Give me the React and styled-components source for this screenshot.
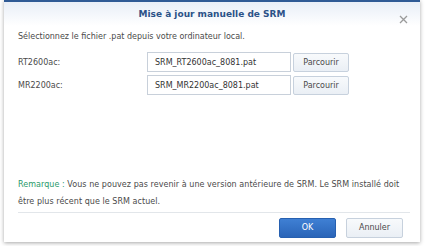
import styled, { createGlobalStyle } from "styled-components"

const Global = createGlobalStyle`
    html, body {
        margin: 0;
        padding: 0;
        background: #ffffff;
    }
    body {
        font-family: "DejaVu Sans", Verdana, sans-serif;
        width: 426px;
        height: 246px;
        overflow: hidden;
    }
`

const Page = styled.div`
    position: relative;
    width: 426px;
    height: 246px;
    padding: 0 6px 4px 4px;
    box-sizing: border-box;
`

const Dialog = styled.div`
    width: 416px;
    height: 242px;
    box-sizing: border-box;
    background: #ffffff;
    border-top: 2px solid #2f5a95;
    box-shadow: 0 1px 4px rgba(0, 0, 0, 0.35);
    display: flex;
    flex-direction: column;
`

const Header = styled.div`
    height: 24px;
    display: flex;
    align-items: center;
    justify-content: center;
    position: relative;
    background: linear-gradient(#e8eef7, #ffffff);
`

const Title = styled.h2`
    margin: 0;
    font-size: 9px;
    font-weight: bold;
    color: #2b5288;
`

const Close = styled.span`
    position: absolute;
    right: 12px;
    top: 7px;
    width: 9px;
    height: 9px;
`

const Body = styled.div`
    flex: 1;
    padding: 6px 14px 0 14px;
    display: flex;
    flex-direction: column;
    color: #4a4a4a;
    font-size: 8px;
`

const Intro = styled.p`
    margin: 0 0 10px 0;
    line-height: 10px;
`

const Row = styled.div`
    display: flex;
    align-items: center;
    height: 20px;
    margin-bottom: 3px;
`

const Label = styled.label`
    width: 129px;
`

const FileInput = styled.div`
    width: 144px;
    height: 20px;
    box-sizing: border-box;
    border: 1px solid #c8d0da;
    padding: 0 7px;
    display: flex;
    align-items: center;
    color: #333;
`

const Button = styled.button`
    font-family: inherit;
    font-size: 8px;
    height: ${p => p.$h || 19}px;
    width: ${p => p.$w || 56}px;
    margin-left: ${p => p.$ml || 2}px;
    border-radius: 2px;
    border: 1px solid ${p => p.$primary ? "#2760b0" : "#c7d1dd"};
    background: ${p => p.$primary
        ? "linear-gradient(#3f80d4, #2a65b8)"
        : "linear-gradient(#f8fafc, #eaeff5)"};
    color: ${p => p.$primary ? "#ffffff" : "#4a4a4a"};
    padding: 0;
    cursor: pointer;
`

const Note = styled.p`
    margin: auto 0 0 0;
    line-height: 17px;
    padding-bottom: 2px;
    letter-spacing: 0.05px;
`

const Hint = styled.span`
    color: #2a9a6a;
`

const Footer = styled.div`
    margin: 0 10px 0 14px;
    border-top: 1px solid #e2e6ea;
    height: 29px;
    display: flex;
    justify-content: flex-end;
    align-items: center;
    gap: 8px;
    padding-right: 7px;
`

function App() {
    return (
        <Page>
            <Global />
            <Dialog>
                <Header>
                    <Title>Mise à jour manuelle de SRM</Title>
                    <Close>
                        <svg width="9" height="9" viewBox="0 0 9 9">
                            <path d="M1 1 L8 8 M8 1 L1 8" stroke="#9a9a9a" strokeWidth="1.3" />
                        </svg>
                    </Close>
                </Header>
                <Body>
                    <Intro>Sélectionnez le fichier .pat depuis votre ordinateur local.</Intro>
                    <Row>
                        <Label>RT2600ac:</Label>
                        <FileInput>SRM_RT2600ac_8081.pat</FileInput>
                        <Button>Parcourir</Button>
                    </Row>
                    <Row>
                        <Label>MR2200ac:</Label>
                        <FileInput>SRM_MR2200ac_8081.pat</FileInput>
                        <Button>Parcourir</Button>
                    </Row>
                    <Note>
                        <Hint>Remarque :</Hint> Vous ne pouvez pas revenir à une version antérieure de SRM. Le SRM installé doit être plus récent que le SRM actuel.
                    </Note>
                </Body>
                <Footer>
                    <Button $primary $w={57} $h={20}>OK</Button>
                    <Button $w={57} $h={20}>Annuler</Button>
                </Footer>
            </Dialog>
        </Page>
    )
}

export default App
